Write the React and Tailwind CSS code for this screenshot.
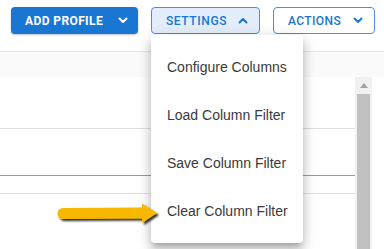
import React from "react";

function Chevron({ up = false, color = "currentColor" }) {
  return (
    <svg width="10" height="7" viewBox="0 0 10 7" className="shrink-0">
      <path
        d={up ? "M1.5 5.5 L5 2 L8.5 5.5" : "M1.5 1.5 L5 5 L8.5 1.5"}
        fill="none"
        stroke={color}
        strokeWidth="2"
        strokeLinecap="round"
        strokeLinejoin="round"
      />
    </svg>
  );
}

export default function App() {
  const items = [
    "Configure Columns",
    "Load Column Filter",
    "Save Column Filter",
    "Clear Column Filter",
  ];
  return (
    <div className="relative w-[384px] h-[249px] overflow-hidden bg-white font-['Liberation_Sans',Arial,sans-serif]">
      {/* Header */}
      <div className="h-[52px] flex items-start pt-[7px] pl-[11px] gap-[13px] border-b border-[#e6e6e6]">
        <button className="h-[27px] w-[127px] flex items-center pl-[14px] pr-[10px] justify-between rounded-[4px] bg-[#1976d2] text-white text-[12px] font-bold tracking-[0.4px] font-['Roboto',sans-serif] shadow-[0_1px_2px_rgba(0,0,0,0.25)]">
          <span>ADD PROFILE</span>
          <Chevron />
        </button>
        <button className="h-[27px] w-[109px] flex items-center pl-[14px] pr-[11px] justify-between rounded-[4px] bg-[#e4eefa] border border-[#4a90dc] text-[#1976d2] text-[12px] font-medium tracking-[0.6px] font-['Roboto',sans-serif]">
          <span>SETTINGS</span>
          <Chevron up />
        </button>
        <button className="h-[27px] w-[102px] flex items-center pl-[14px] pr-[11px] justify-between rounded-[4px] bg-white border border-[#4a90dc] text-[#1976d2] text-[12px] font-medium tracking-[0.4px] font-['Roboto',sans-serif]">
          <span>ACTIONS</span>
          <Chevron />
        </button>
      </div>

      {/* Table area */}
      <div className="h-[25px] bg-[#fbfbfb]" />
      <div className="flex h-[172px]">
        <div className="w-[355px] flex flex-col">
          <div className="h-[52px] border-b border-[#dedede]" />
          <div className="h-[47px] border-b border-[#9a9a9a]" />
          <div className="h-[18px] border-b border-[#dedede]" />
          <div className="flex-1" />
        </div>
        <div className="w-[17px] bg-[#f1f1f1] flex flex-col items-center">
          <div className="h-[17px] w-full flex items-center justify-center">
            <div className="w-0 h-0 border-l-[4px] border-r-[4px] border-b-[5px] border-l-transparent border-r-transparent border-b-[#a3a3a3]" />
          </div>
          <div className="w-[13px] flex-1 bg-[#c1c1c1]" />
        </div>
      </div>
      <div className="flex h-[13px]">
        <div className="w-[355px] bg-[#ececec]" />
        <div className="w-[17px] bg-[#f1f1f1] flex justify-center">
          <div className="w-[13px] bg-[#c1c1c1]" />
        </div>
      </div>

      {/* Dropdown menu */}
      <div className="absolute left-[151px] top-[35px] w-[152px] py-[8px] bg-white rounded-[4px] shadow-[0_5px_5px_-3px_rgba(0,0,0,0.2),0_8px_10px_1px_rgba(0,0,0,0.14),0_3px_14px_2px_rgba(0,0,0,0.12)]">
        {items.map((t) => (
          <div key={t} className="h-[48px] flex items-center pl-[16px] text-[14px] text-[#3a3a3a] whitespace-nowrap">
            {t}
          </div>
        ))}
      </div>

      {/* Arrow annotation */}
      <svg className="absolute left-[50px] top-[198px]" width="115" height="36" viewBox="0 0 115 36">
        <defs>
          <filter id="sh" x="-20%" y="-50%" width="140%" height="200%">
            <feGaussianBlur in="SourceAlpha" stdDeviation="1.2" />
            <feOffset dx="1.5" dy="2" result="o" />
            <feComponentTransfer>
              <feFuncA type="linear" slope="0.85" />
            </feComponentTransfer>
            <feMerge>
              <feMergeNode />
              <feMergeNode in="SourceGraphic" />
            </feMerge>
          </filter>
        </defs>
        <g filter="url(#sh)">
          <path
            d="M13 10 L92 9.5 L92 5.5 L107 15 L92 25 L92 20.5 L13 21 A5.5 5.5 0 0 1 13 10 Z"
            fill="#f9b800"
          />
        </g>
      </svg>
    </div>
  );
}
